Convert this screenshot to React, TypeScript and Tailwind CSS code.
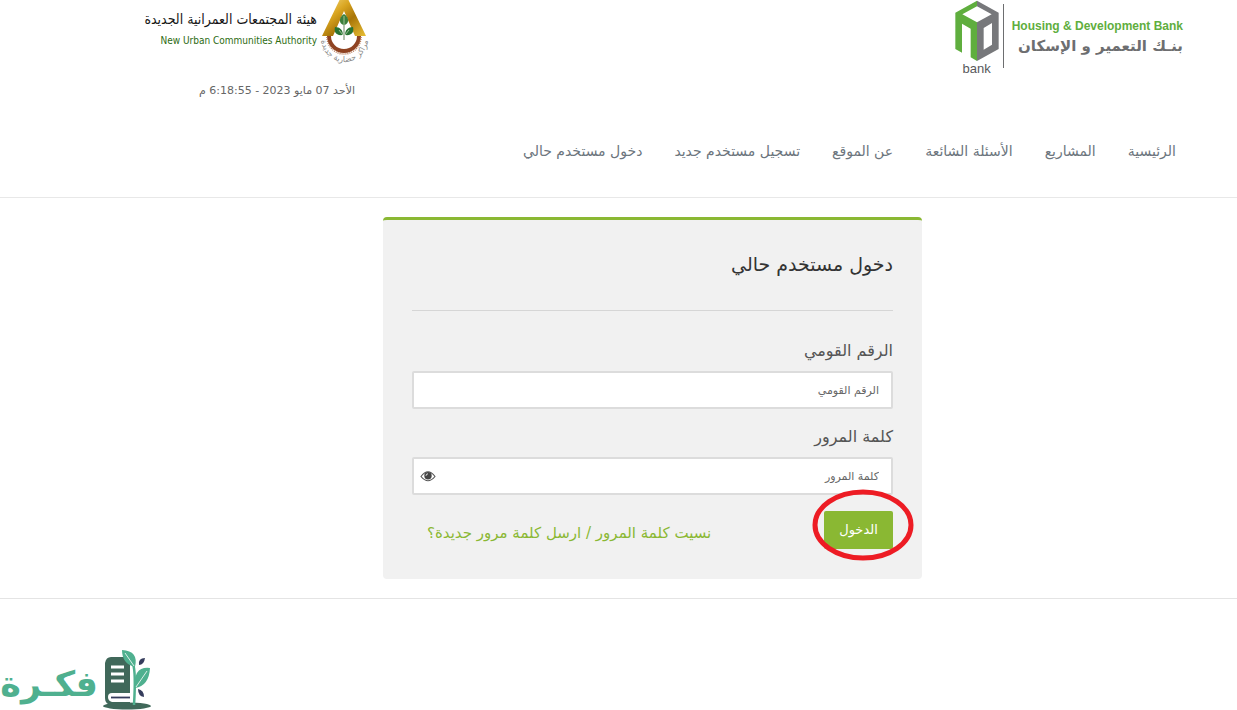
import { useState } from "react";
import type { ReactNode } from "react";

const navLinks = [
  "الرئيسية",
  "المشاريع",
  "الأسئلة الشائعة",
  "عن الموقع",
  "تسجيل مستخدم جديد",
  "دخول مستخدم حالي",
];

function BankLogo() {
  return (
    <a href="#home" dir="ltr" className="flex items-start gap-1">
      <span className="flex w-11 flex-col items-center">
        <svg viewBox="16 0 132 186" className="h-[62px] w-11" aria-hidden="true">
          <path d="M82 2 V19 L38 43 L82 67 V183 L63 172 V86 L37 71 V158 L17 147 V38 Z" fill="#5fae3e" />
          <path d="M82 2 L147 38 V147 L82 183 V67 L126 43 L82 19 Z M102 84 V149 L127 134 V69 Z" fill="#77787b" fillRule="evenodd" />
        </svg>
        <span className="font-['Liberation_Sans'] text-[13px] leading-[13px] text-[#58595b]">bank</span>
      </span>
      <span className="mt-1 h-16 w-px bg-[#6d6e70]" />
      <span className="flex flex-col pt-4 pl-1 whitespace-nowrap">
        <span className="font-['Liberation_Sans'] text-[12px] leading-5 font-bold text-[#5fae3e]">
          Housing &amp; Development Bank
        </span>
        <span dir="rtl" className="font-['DejaVu_Sans'] text-[15px] leading-5 font-bold text-[#6d6e70]">
          بنـك التعمير و الإسكان
        </span>
      </span>
    </a>
  );
}

function AuthorityEmblem() {
  return (
    <svg viewBox="-3 0 50 64" className="h-16 w-[50px] shrink-0 overflow-visible" aria-hidden="true">
      <defs>
        <linearGradient id="gold" x1="0" x2="1" y1="0" y2="1">
          <stop offset="0" stopColor="#f7e08a" />
          <stop offset="0.35" stopColor="#d9a520" />
          <stop offset="0.6" stopColor="#a87508" />
          <stop offset="1" stopColor="#e9bf35" />
        </linearGradient>
        <path id="mottoArc" d="M1 38 A23.5 24 0 0 0 48 38" />
      </defs>
      <path d="M9 36 A15 15 0 0 0 39 36" fill="none" stroke="#8f4322" strokeWidth="4" />
      <path d="M7 37 A17 17 0 0 0 41 37" fill="none" stroke="#b77a58" strokeWidth="1.5" strokeDasharray="1 1" />
      <path d="M20 -1 H28 L46 36 H35 L24 11 L13 36 H2 Z" fill="url(#gold)" />
      <path d="M24 20 V40" stroke="#69845f" strokeWidth="1" />
      <path d="M24 14 C18 18 19 24 24 25 C29 24 30 18 24 14 Z" fill="#3b7e3b" />
      <path d="M23 35 C15 36 14 31 15 27 C20 27 23 30 23 35 Z M25 35 C33 36 34 31 33 27 C28 27 25 30 25 35 Z" fill="#287333" />
      <path d="M24 16 V25 M19 30 L23 35 M29 30 L25 35" stroke="#b8d4ad" strokeWidth="0.8" />
      <text direction="rtl" fill="#888" fontSize="8" fontFamily="DejaVu Sans" textAnchor="middle">
        <textPath href="#mottoArc" startOffset="50%">مراكز حضارية جديدة</textPath>
      </text>
    </svg>
  );
}

function AuthorityLogo() {
  return (
    <a href="#authority" className="flex items-start">
      <AuthorityEmblem />
      <span className="flex flex-col pt-2 whitespace-nowrap">
        <span className="font-['DejaVu_Sans_Condensed','DejaVu_Sans'] text-[14px] leading-[22px] text-[#161616]">
          هيئة المجتمعات العمرانية الجديدة
        </span>
        <span dir="ltr" className="text-right font-['DejaVu_Sans_Condensed'] text-[10px] leading-[22px] text-[#2d6b12]">
          New Urban Communities Authority
        </span>
      </span>
    </a>
  );
}

function Field({ id, label, type, children }: { id: string; label: string; type: string; children?: ReactNode }) {
  return (
    <div>
      <label htmlFor={id} className="block text-[16px] leading-6 text-[#555]">
        {label}
      </label>
      <div className="mt-2 flex h-[38px] items-center rounded-xs border-2 border-[#dcdcdc] bg-white">
        <input
          id={id}
          type={type}
          placeholder={label}
          className="h-full min-w-0 flex-1 bg-transparent px-3 text-[11px] text-[#555] outline-none placeholder:text-[#666]"
        />
        {children}
      </div>
    </div>
  );
}

function FikraLogo() {
  return (
    <a href="#fikra" dir="ltr" className="flex w-fit items-end gap-1">
      <span dir="rtl" className="w-[98px] pb-1 font-['DejaVu_Sans'] text-[35px] leading-[44px] font-bold whitespace-nowrap text-[#4fb08f]">
        فكـرة
      </span>
      <svg viewBox="0 0 50 60" className="h-[60px] w-[50px]" aria-hidden="true">
        <ellipse cx="25" cy="56" rx="24" ry="3.5" fill="#40685a" />
        <path d="M9 7 H25 Q28 7 28 10 V55 H9 Q3 54 3 48 V13 Q4 7 9 7 Z" fill="#40685a" />
        <path d="M10 43 H28 V52 H10 Q6 51 6 47 Q6 43 10 43 Z" fill="#fff" />
        <path d="M9 47.5 H28" stroke="#353c5c" strokeWidth="1.8" />
        <path d="M9 17 H22 M9 24 H22 M9 31 H22" stroke="#fff" strokeWidth="3" />
        <path d="M31 14 Q34 22 32 55" fill="none" stroke="#4fb08f" strokeWidth="2.5" />
        <path d="M20 0 Q37 1 33 17 Q20 14 20 0 Z M48 18 Q31 16 33 38 Q47 36 48 18 Z" fill="#4fb08f" />
        <path d="M23 3 L32 16 M45 21 L34 37" stroke="#fff" strokeWidth="0.8" />
        <path d="M43 8 Q36 8 37 15 Q42 15 43 8 Z M36 39 Q42 40 42 47 Q36 46 36 39 Z" fill="#353c5c" />
      </svg>
    </a>
  );
}

export default function App() {
  const [visible, setVisible] = useState(false);

  return (
    <div dir="rtl" lang="ar" className="flex min-h-screen flex-col bg-white font-['DejaVu_Sans',sans-serif]">
      <header className="border-b border-[#e8e8e8] pb-8">
        <div className="flex items-start justify-between pr-[54px] pl-[145px]">
          <BankLogo />
          <div className="w-[222px]">
            <AuthorityLogo />
            <time className="mt-[17px] block pr-3 text-[11px] leading-5 whitespace-nowrap text-[#666]">
              الأحد 07 مايو 2023 - 6:18:55 م
            </time>
          </div>
        </div>
        <nav className="mt-9 pr-[61px]">
          <ul className="flex flex-wrap gap-8">
            {navLinks.map((item) => (
              <li key={item}>
                <a href="#nav" className="block text-[14px] leading-7 whitespace-nowrap text-[#6c757d]">
                  {item}
                </a>
              </li>
            ))}
          </ul>
        </nav>
      </header>

      <main className="border-b border-[#e4e4e4] pt-[19px] pb-[19px] pl-[68px]">
        <form
          onSubmit={(e) => e.preventDefault()}
          className="mx-auto w-full max-w-[539px] rounded-sm border-t-3 border-[#8ab833] bg-[#f1f1f1] px-[29px] pb-[30px]"
        >
          <h1 className="border-b border-[#d6d6d6] pt-7 pb-[30px] text-[19px] leading-8 text-[#333]">دخول مستخدم حالي</h1>
          <div className="mt-7 flex flex-col gap-4">
            <Field id="national-id" label="الرقم القومي" type="text" />
            <Field id="password" label="كلمة المرور" type={visible ? "text" : "password"}>
              <button
                type="button"
                aria-label="إظهار كلمة المرور"
                onClick={() => setVisible(!visible)}
                className="ml-1 flex size-5 items-center justify-center"
              >
                <svg viewBox="0 0 16 11" className="h-[11px] w-4" aria-hidden="true">
                  <path d="M1 5.5 Q8 -4 15 5.5 Q8 14 1 5.5 Z" fill="#fff" stroke="#555" strokeWidth="1.1" />
                  <circle cx="8" cy="4.8" r="3.7" fill="#444" />
                  <path d="M6 4.8 A2 2 0 0 1 8 2.8" fill="none" stroke="#eee" strokeWidth="0.9" />
                </svg>
              </button>
            </Field>
          </div>
          <div className="mt-4 flex items-end justify-between pl-[15px]">
            <div className="relative">
              <button type="submit" className="block h-[38px] w-[69px] rounded-xs bg-[#8ab833] text-[13px] text-white">
                الدخول
              </button>
              <svg viewBox="0 0 102 72" className="pointer-events-none absolute -top-[22px] -left-3 h-[72px] w-[102px] max-w-none" aria-hidden="true">
                <ellipse cx="51" cy="36" rx="48" ry="33" fill="none" stroke="#ed1c24" strokeWidth="5" />
              </svg>
            </div>
            <a href="#forgot" className="text-[15px] leading-8 text-[#8ab833]">
              نسيت كلمة المرور / ارسل كلمة مرور جديدة؟
            </a>
          </div>
        </form>
      </main>

      <footer className="mt-auto pt-10" dir="ltr">
        <FikraLogo />
      </footer>
    </div>
  );
}
